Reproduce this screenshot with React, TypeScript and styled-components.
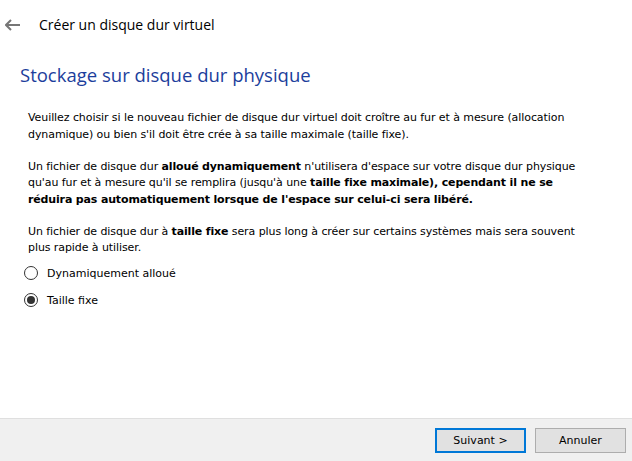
import React, { useState } from "react";
import styled, { createGlobalStyle } from "styled-components";

const Global = createGlobalStyle`
  html, body { margin: 0; padding: 0; background: #fff; }
  #root { width: 632px; height: 461px; }
`;

function BackArrow() {
  return (
    <svg width="16" height="12" viewBox="0 0 16 12">
      <path d="M6 1 L1 6 L6 11" fill="none" stroke="#767676" strokeWidth="2" />
      <path d="M1.5 6 H15" stroke="#767676" strokeWidth="2" />
    </svg>
  );
}

type Choice = "dyn" | "fixed";

export default function App() {
  const [choice, setChoice] = useState<Choice>("fixed");

  return (
    <Window>
      <Global />
      <Header>
        <BackButton><BackArrow /></BackButton>
        <HeaderTitle>Créer un disque dur virtuel</HeaderTitle>
      </Header>
      <Content>
        <PageTitle>Stockage sur disque dur physique</PageTitle>
        <Para>
          Veuillez choisir si le nouveau fichier de disque dur virtuel doit croître au fur et à mesure (allocation
          <br />
          dynamique) ou bien s'il doit être crée à sa taille maximale (taille fixe).
        </Para>
        <Para>
          Un fichier de disque dur <b>alloué dynamiquement</b> n'utilisera d'espace sur votre disque dur physique
          <br />
          qu'au fur et à mesure qu'il se remplira (jusqu'à une <b>taille fixe maximale), cependant il ne se</b>
          <br />
          <b>réduira pas automatiquement lorsque de l'espace sur celui-ci sera libéré.</b>
        </Para>
        <Para>
          Un fichier de disque dur à <b>taille fixe</b> sera plus long à créer sur certains systèmes mais sera souvent
          <br />
          plus rapide à utiliser.
        </Para>
        <RadioGroup>
          <RadioRow onClick={() => setChoice("dyn")}>
            <RadioCircle $checked={choice === "dyn"} />
            Dynamiquement alloué
          </RadioRow>
          <RadioRow onClick={() => setChoice("fixed")}>
            <RadioCircle $checked={choice === "fixed"} />
            Taille fixe
          </RadioRow>
        </RadioGroup>
      </Content>
      <Footer>
        <Button $default>Suivant &gt;</Button>
        <Button>Annuler</Button>
      </Footer>
    </Window>
  );
}

const Window = styled.div`
  width: 632px;
  height: 461px;
  display: flex;
  flex-direction: column;
  background: #fff;
  font-family: "DejaVu Sans", "Liberation Sans", sans-serif;
  color: #000;
`;

const Header = styled.div`
  height: 48px;
  display: flex;
  align-items: center;
`;

const BackButton = styled.div`
  width: 39px;
  display: flex;
  align-items: center;
  padding-left: 5px;
  box-sizing: border-box;
  margin-top: 1px;
`;

const HeaderTitle = styled.div`
  font-family: "Open Sans", "Noto Sans", sans-serif;
  font-size: 14px;
  color: #000;
`;

const Content = styled.div`
  flex: 1;
  padding: 14px 20px 0 28px;
`;

const PageTitle = styled.h1`
  margin: 0 0 0 -8px;
  font-family: "Open Sans", "Noto Sans", sans-serif;
  font-weight: 400;
  font-size: 18.5px;
  color: #1c3e9c;
  line-height: 26px;
  margin-bottom: 22px;
`;

const Para = styled.p`
  margin: 0 0 15.5px;
  font-size: 11px;
  line-height: 16.5px;
  letter-spacing: -0.08px;
  white-space: nowrap;
  b { font-weight: 700; letter-spacing: -0.15px; }
`;

const RadioGroup = styled.div`
  display: flex;
  flex-direction: column;
  gap: 11px;
  margin-left: -4px;
  margin-top: -7px;
`;

const RadioRow = styled.label`
  display: flex;
  align-items: center;
  gap: 9px;
  font-size: 11px;
  height: 16px;
  cursor: default;
`;

const RadioCircle = styled.span<{ $checked: boolean }>`
  width: 14px;
  height: 14px;
  border-radius: 50%;
  border: 1px solid #333;
  box-sizing: border-box;
  background: #fff;
  position: relative;
  &::after {
    content: "";
    display: ${(p) => (p.$checked ? "block" : "none")};
    position: absolute;
    left: 2px;
    top: 2px;
    width: 8px;
    height: 8px;
    border-radius: 50%;
    background: #333;
  }
`;

const Footer = styled.div`
  height: 42px;
  border-top: 1px solid #dfdfdf;
  background: #f0f0f0;
  display: flex;
  align-items: center;
  justify-content: flex-end;
  gap: 9px;
  padding-right: 6px;
`;

const Button = styled.button<{ $default?: boolean }>`
  width: 91px;
  height: 25px;
  font-family: "DejaVu Sans", "Liberation Sans", sans-serif;
  font-size: 11px;
  color: #000;
  background: #e1e1e1;
  border: ${(p) => (p.$default ? "2px solid #0078d7" : "1px solid #adadad")};
  padding: 0;
`;
